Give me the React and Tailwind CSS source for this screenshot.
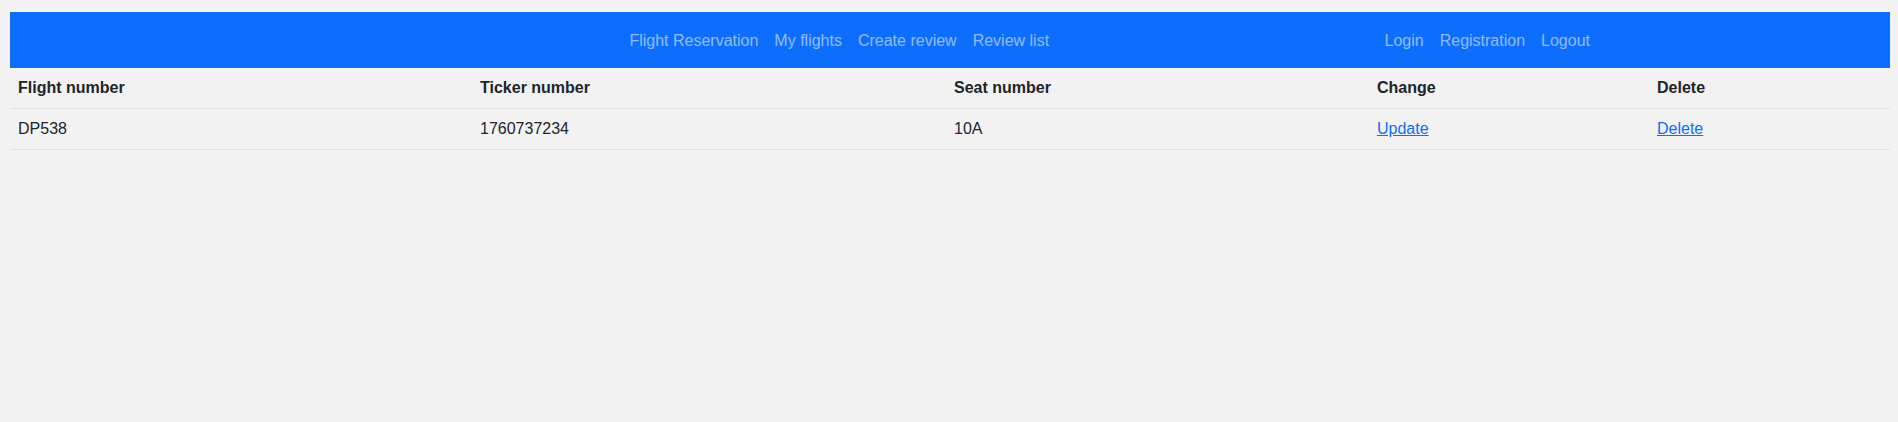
export default function App() {
  const font = { fontFamily: '"Liberation Sans", Arial, sans-serif' };
  return (
    <div className="min-h-[422px] bg-[#f2f2f2] pt-[12px] pl-[10px] pr-[8px] text-[16px] leading-6 text-[#212529]" style={font}>
      <nav className="bg-[#0d6efd] py-2">
        <div className="mx-auto flex max-w-[1320px] items-center px-3">
          <ul className="mx-auto flex">
            {['Flight Reservation', 'My flights', 'Create review', 'Review list'].map((t) => (
              <li key={t}>
                <a href="#" className="block px-2 pt-[9px] pb-[7px] text-[rgba(255,255,255,0.55)]">{t}</a>
              </li>
            ))}
          </ul>
          <ul className="flex">
            {['Login', 'Registration', 'Logout'].map((t) => (
              <li key={t}>
                <a href="#" className="block px-2 pt-[9px] pb-[7px] text-[rgba(255,255,255,0.55)]">{t}</a>
              </li>
            ))}
          </ul>
        </div>
      </nav>
      <table className="w-full table-fixed border-collapse">
        <colgroup>
          <col className="w-[462px]" />
          <col className="w-[474px]" />
          <col className="w-[423px]" />
          <col className="w-[280px]" />
          <col />
        </colgroup>
        <thead>
          <tr>
            {['Flight number', 'Ticker number', 'Seat number', 'Change', 'Delete'].map((t) => (
              <th key={t} className="border-b border-[#dee2e6] p-2 text-left font-bold">{t}</th>
            ))}
          </tr>
        </thead>
        <tbody>
          <tr>
            <td className="border-b border-[#dee2e6] p-2">DP538</td>
            <td className="border-b border-[#dee2e6] p-2">1760737234</td>
            <td className="border-b border-[#dee2e6] p-2">10A</td>
            <td className="border-b border-[#dee2e6] p-2">
              <a href="#" className="text-[#0d6efd] underline">Update</a>
            </td>
            <td className="border-b border-[#dee2e6] p-2">
              <a href="#" className="text-[#0d6efd] underline">Delete</a>
            </td>
          </tr>
        </tbody>
      </table>
    </div>
  );
}
